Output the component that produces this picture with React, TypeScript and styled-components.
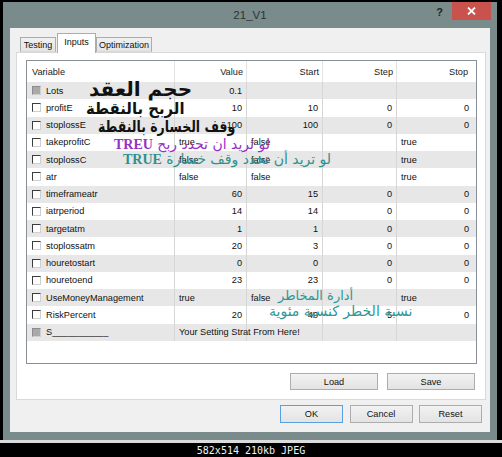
import React from "react";
import styled, { createGlobalStyle } from "styled-components";

const GlobalStyle = createGlobalStyle`
  html, body {
    margin: 0;
    padding: 0;
    background: #000;
  }
  body {
    width: 502px;
    height: 457px;
    overflow: hidden;
    font-family: "Liberation Sans", Arial, sans-serif;
  }
`;

// screen around the dialog
const Screen = styled.div`
  width: 502px;
  height: 457px;
  background: #000;
  display: flex;
  flex-direction: column;
`;

const Window = styled.div`
  margin: 2px 5px 0 3px;
  width: 494px;
  height: 438px;
  background: #7a8b8c;
  display: flex;
  flex-direction: column;
`;

const TitleBar = styled.div`
  height: 26px;
  display: grid;
  grid-template-columns: 1fr auto 1fr;
  align-items: start;
`;

const Title = styled.div`
  grid-column: 2;
  margin-top: 6px;
  font-size: 11.5px;
  color: #2e3333;
  line-height: 14px;
`;

const TitleButtons = styled.div`
  grid-column: 3;
  justify-self: end;
  display: flex;
  align-items: flex-start;
  gap: 9px;
  margin-right: 6px;
`;

const HelpMark = styled.span`
  margin-top: 4px;
  font-size: 11px;
  font-weight: 700;
  color: #1e2424;
  line-height: 12px;
`;

const CloseBtn = styled.div`
  width: 39px;
  height: 18px;
  background: #c9524c;
  display: flex;
  align-items: center;
  justify-content: center;
`;

const Content = styled.div`
  margin: 0 7px 0 7px;
  height: 404px;
  background: #f0f0f0;
  display: flex;
  flex-direction: column;
`;

const TabStrip = styled.div`
  margin: 5px 0 0 6px;
  height: 19px;
  display: flex;
  align-items: flex-end;
  padding-left: 4px;
  position: relative;
  z-index: 1;
`;

const Tab = styled.div<{ $active?: boolean; $w: number }>`
  box-sizing: border-box;
  width: ${(p) => p.$w}px;
  height: ${(p) => (p.$active ? 20 : 15)}px;
  margin-bottom: ${(p) => (p.$active ? -1 : 0)}px;
  margin-left: ${(p) => (p.$active ? 1 : 0)}px;
  border: 1px solid #acacac;
  border-bottom: ${(p) => (p.$active ? "none" : "1px solid #d9d9d9")};
  background: ${(p) => (p.$active ? "#fff" : "linear-gradient(#f0f0f0, #e5e5e5)")};
  font-size: 9px;
  color: #111;
  display: flex;
  justify-content: center;
  align-items: ${(p) => (p.$active ? "flex-start" : "center")};
  padding-top: ${(p) => (p.$active ? 3 : 0)}px;
`;

const TabPage = styled.div`
  box-sizing: border-box;
  margin-left: 6px;
  width: 470px;
  height: 348px;
  border: 1px solid #d9d9d9;
  background: #fff;
  padding: 7px 0 0 9px;
  display: flex;
  flex-direction: column;
`;

const List = styled.div`
  position: relative;
  box-sizing: border-box;
  width: 451px;
  height: 304px;
  border: 1px solid #8a8f96;
  background: #fff;
`;

const COLS = "148px 72px 76px 74px 76px";

const HeaderRow = styled.div`
  display: grid;
  grid-template-columns: ${COLS};
  height: 21px;
  background: #fff;
`;

const HeaderCell = styled.div<{ $align: "left" | "right" }>`
  font-size: 9.2px;
  color: #1a1a1a;
  display: flex;
  align-items: center;
  justify-content: ${(p) => (p.$align === "left" ? "flex-start" : "flex-end")};
  padding: 0 ${(p) => (p.$align === "right" ? 3 : 0)}px 0 ${(p) => (p.$align === "left" ? 5 : 0)}px;
  border-right: 1px solid #e3e3e3;
  &:last-child {
    border-right: none;
    padding-right: 5px;
  }
`;

const Row = styled.div<{ $shade: boolean }>`
  display: grid;
  grid-template-columns: ${COLS};
  height: 17.25px;
  background: ${(p) => (p.$shade ? "#e7e7e7" : "#fff")};
`;

const NameCell = styled.div`
  display: flex;
  align-items: center;
  padding-left: 5px;
  font-size: 9.2px;
  color: #111;
  border-right: 1px solid #d6d6d6;
  white-space: nowrap;
`;

const Cell = styled.div<{ $align: "left" | "right" }>`
  display: flex;
  align-items: center;
  justify-content: ${(p) => (p.$align === "left" ? "flex-start" : "flex-end")};
  padding: 0 4px;
  font-size: 9.2px;
  color: #111;
  border-right: 1px solid #d6d6d6;
  white-space: nowrap;
  overflow: visible;
  &:last-child {
    border-right: none;
  }
`;

const Check = styled.span<{ $disabled?: boolean }>`
  box-sizing: border-box;
  flex: none;
  width: 9px;
  height: 9px;
  margin-right: 5px;
  border-top: 1px solid ${(p) => (p.$disabled ? "#8c8c8c" : "#3c3c3c")};
  border-left: 1px solid ${(p) => (p.$disabled ? "#8c8c8c" : "#3c3c3c")};
  border-right: 1px solid #cfcfcf;
  border-bottom: 1px solid #cfcfcf;
  background: ${(p) => (p.$disabled ? "#a9a9a9" : "#fff")};
`;

const ButtonRow = styled.div<{ $top: number; $right: number; $gap: number }>`
  display: flex;
  justify-content: flex-end;
  gap: ${(p) => p.$gap}px;
  margin-top: ${(p) => p.$top}px;
  padding-right: ${(p) => p.$right}px;
`;

const Button = styled.div<{ $w: number; $h: number; $default?: boolean }>`
  box-sizing: border-box;
  width: ${(p) => p.$w}px;
  height: ${(p) => p.$h}px;
  border: 1px solid ${(p) => (p.$default ? "#5b9fe0" : "#adadad")};
  background: linear-gradient(#f2f2f2, #e3e3e3);
  font-size: 9.2px;
  color: #111;
  display: flex;
  align-items: center;
  justify-content: center;
`;

// notes written over the screenshot; squeeze narrows the wide font
const Annotation = styled.div<{
  $x: number;
  $y: number;
  $color: string;
  $size: number;
  $bold?: boolean;
  $squeeze?: number;
}>`
  position: absolute;
  left: ${(p) => p.$x}px;
  top: ${(p) => p.$y}px;
  color: ${(p) => p.$color};
  font-family: "DejaVu Sans", sans-serif;
  font-size: ${(p) => p.$size}px;
  font-weight: ${(p) => (p.$bold ? 700 : 400)};
  line-height: 1;
  white-space: nowrap;
  direction: rtl;
  transform: scaleX(${(p) => p.$squeeze ?? 1});
  transform-origin: left center;
  pointer-events: none;
`;

const Latin = styled.span`
  font-family: "Liberation Serif", serif;
  font-weight: 700;
`;

const Rule = styled.div`
  height: 3px;
  background: #dcdcdc;
`;

const Caption = styled.div`
  flex: 1;
  display: flex;
  align-items: center;
  justify-content: center;
  color: #f4f4f4;
  font-family: "DejaVu Sans Mono", monospace;
  font-size: 10px;
`;

type Param = {
  name: string;
  value: string;
  start?: string;
  step?: string;
  stop?: string;
  disabled?: boolean;
};

const params: Param[] = [
  { name: "Lots", value: "0.1", disabled: true },
  { name: "profitE", value: "10", start: "10", step: "0", stop: "0" },
  { name: "stoplossE", value: "100", start: "100", step: "0", stop: "0" },
  { name: "takeprofitC", value: "true", start: "false", stop: "true" },
  { name: "stoplossC", value: "false", start: "false", stop: "true" },
  { name: "atr", value: "false", start: "false", stop: "true" },
  { name: "timeframeatr", value: "60", start: "15", step: "0", stop: "0" },
  { name: "iatrperiod", value: "14", start: "14", step: "0", stop: "0" },
  { name: "targetatm", value: "1", start: "1", step: "0", stop: "0" },
  { name: "stoplossatm", value: "20", start: "3", step: "0", stop: "0" },
  { name: "houretostart", value: "0", start: "0", step: "0", stop: "0" },
  { name: "houretoend", value: "23", start: "23", step: "0", stop: "0" },
  { name: "UseMoneyManagement", value: "true", start: "false", stop: "true" },
  { name: "RiskPercent", value: "20", start: "40", step: "5", stop: "0" },
  { name: "S___________", value: "Your Setting Strat From Here!", disabled: true },
];

const isNumber = (s?: string) => !!s && /^[\d.]+$/.test(s);
const align = (s?: string) => (isNumber(s) ? "right" : "left");

export default function App() {
  return (
    <Screen>
      <GlobalStyle />
      <Window>
        <TitleBar>
          <Title>21_V1</Title>
          <TitleButtons>
            <HelpMark>?</HelpMark>
            <CloseBtn>
              <svg width="9" height="8" viewBox="0 0 9 8">
                <path d="M1 0.5 L8 7.5 M8 0.5 L1 7.5" stroke="#fff" strokeWidth="1.8" />
              </svg>
            </CloseBtn>
          </TitleButtons>
        </TitleBar>
        <Content>
          <TabStrip>
            <Tab $w={36}>Testing</Tab>
            <Tab $w={39} $active>Inputs</Tab>
            <Tab $w={56}>Optimization</Tab>
          </TabStrip>
          <TabPage>
            <List>
              <HeaderRow>
                <HeaderCell $align="left">Variable</HeaderCell>
                <HeaderCell $align="right">Value</HeaderCell>
                <HeaderCell $align="right">Start</HeaderCell>
                <HeaderCell $align="right">Step</HeaderCell>
                <HeaderCell $align="right">Stop</HeaderCell>
              </HeaderRow>
              {params.map((p, i) => (
                <Row key={p.name} $shade={i % 2 === 0}>
                  <NameCell>
                    <Check $disabled={p.disabled} />
                    {p.name}
                  </NameCell>
                  <Cell $align={align(p.value)}>{p.value}</Cell>
                  <Cell $align={align(p.start)}>{p.start}</Cell>
                  <Cell $align={align(p.step)}>{p.step}</Cell>
                  <Cell $align={align(p.stop)}>{p.stop}</Cell>
                </Row>
              ))}

              {/* hand-written notes on top of the grid */}
              <Annotation $x={62} $y={18} $color="#111" $size={20} $bold>
                حجم العقد
              </Annotation>
              <Annotation $x={59} $y={40} $color="#111" $size={16} $bold $squeeze={0.93}>
                الربح بالنقطة
              </Annotation>
              <Annotation $x={71} $y={58} $color="#111" $size={16} $bold $squeeze={0.78}>
                وقف الخسارة بالنقطة
              </Annotation>
              <Annotation $x={87} $y={76} $color="#9630c8" $size={14}>
                لو تريد ان تحدد ربح <Latin>TREU</Latin>
              </Annotation>
              <Annotation $x={96} $y={91} $color="#2f9090" $size={14}>
                لو تريد أن تحدد وقف خسارة <Latin>TRUE</Latin>
              </Annotation>
              <Annotation $x={251} $y={228} $color="#2f9696" $size={13}>
                أدارة المخاطر
              </Annotation>
              <Annotation $x={242} $y={243} $color="#2f9696" $size={14}>
                نسبة الخطر كنسبة مئوية
              </Annotation>
            </List>
            <ButtonRow $top={9} $right={10} $gap={9}>
              <Button $w={88} $h={17}>Load</Button>
              <Button $w={88} $h={17}>Save</Button>
            </ButtonRow>
          </TabPage>
          <ButtonRow $top={5} $right={8} $gap={6.5}>
            <Button $w={63} $h={18} $default>OK</Button>
            <Button $w={63} $h={18}>Cancel</Button>
            <Button $w={63} $h={18}>Reset</Button>
          </ButtonRow>
        </Content>
      </Window>
      <Rule />
      <Caption>582x514 210kb JPEG</Caption>
    </Screen>
  );
}
